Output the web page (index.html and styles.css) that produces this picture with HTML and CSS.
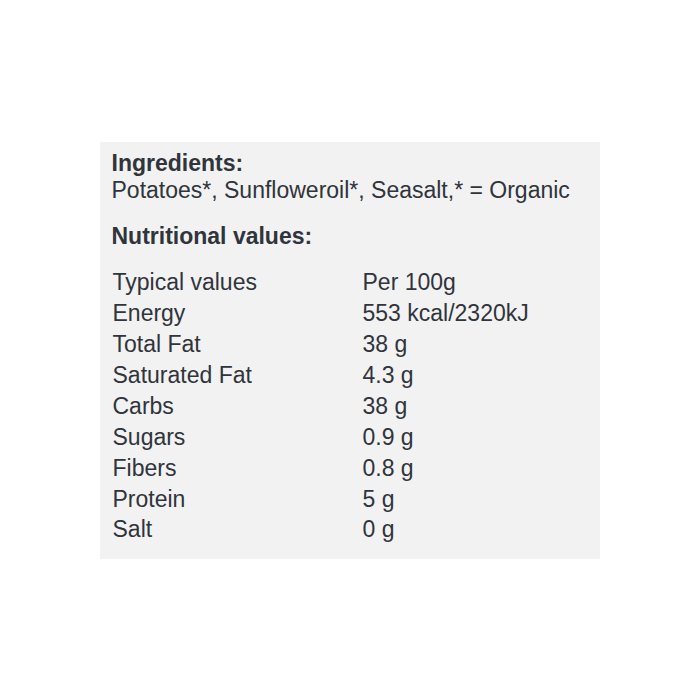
FILE: index.html
```html
<!DOCTYPE html>
<html>
<head>
<meta charset="utf-8">
<link rel="stylesheet" href="styles.css">
</head>
<body>
<div class="card">
  <h3 class="heading">Ingredients:</h3>
  <p class="text">Potatoes*, Sunfloweroil*, Seasalt,* = Organic</p>
  <h3 class="heading heading-gap">Nutritional values:</h3>
  <table class="nutri">
    <tbody>
      <tr><td class="name">Typical values</td><td>Per 100g</td></tr>
      <tr><td class="name">Energy</td><td>553 kcal/2320kJ</td></tr>
      <tr><td class="name">Total Fat</td><td>38 g</td></tr>
      <tr><td class="name">Saturated Fat</td><td>4.3 g</td></tr>
      <tr><td class="name">Carbs</td><td>38 g</td></tr>
      <tr><td class="name">Sugars</td><td>0.9 g</td></tr>
      <tr><td class="name">Fibers</td><td>0.8 g</td></tr>
      <tr><td class="name">Protein</td><td>5 g</td></tr>
      <tr><td class="name">Salt</td><td>0 g</td></tr>
    </tbody>
  </table>
</div>
</body>
</html>
```
FILE: styles.css
```css
html, body {
  margin: 0;
  padding: 0;
  background: #ffffff;
}
body {
  padding-top: 142px;
  font-family: "Liberation Sans", Arial, sans-serif;
  color: #30343b;
}
.card {
  width: 500px;
  margin: 0 auto;
  box-sizing: border-box;
  background: #f2f2f2;
  padding: 8px 11px 14px 11.5px;
}
.heading {
  margin: 0;
  font-size: 23px;
  line-height: 26.5px;
  font-weight: bold;
}
.heading-gap {
  margin-top: 20px;
}
.text {
  margin: 0;
  font-size: 23px;
  line-height: 26.5px;
}
.nutri {
  margin-top: 17.8px;
  border-collapse: collapse;
  font-size: 23px;
}
.nutri td {
  padding: 2.2px 1px;
  line-height: 26.5px;
  vertical-align: top;
  white-space: nowrap;
}
.nutri td.name {
  width: 248px;
}
```
